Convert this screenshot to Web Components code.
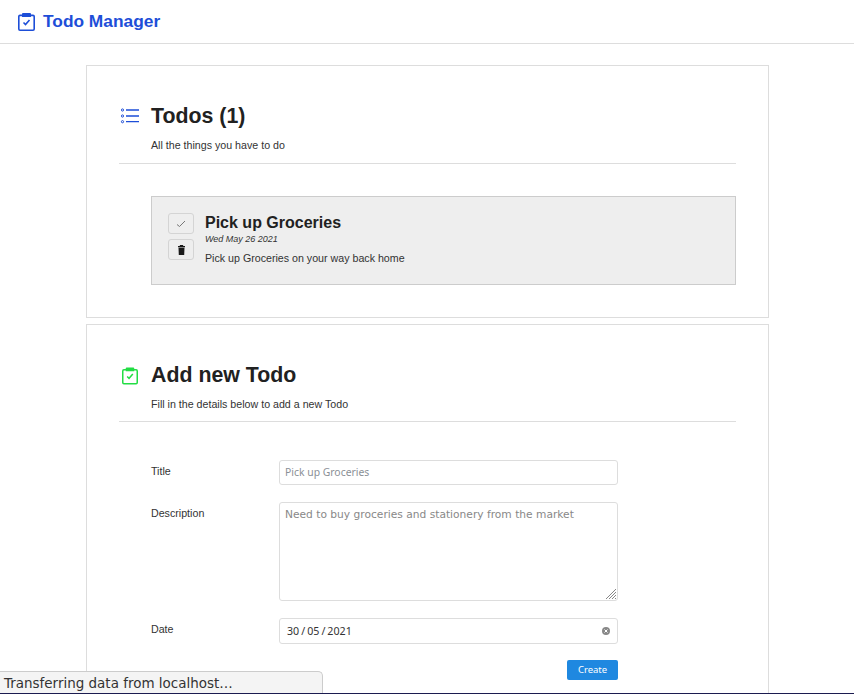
<!DOCTYPE html>
<html><head><meta charset="utf-8">
<style>
html,body{margin:0;padding:0;height:694px;overflow:hidden;background:#fff;font-family:"Liberation Sans",Arial,sans-serif;color:#212121}
</style></head><body>
<script>
const def=(n,html)=>customElements.define(n,class extends HTMLElement{constructor(){super();this.attachShadow({mode:'open'}).innerHTML=html}});
def('clip-icon',`<style>:host{display:block;width:17px;height:18px}svg{display:block;width:100%;height:100%}</style>
<svg viewBox="0 0 17 18" fill="none" stroke="currentColor" stroke-linejoin="round"><rect x=".8" y="2.400" width="15.400" height="14.800" rx="1.200" stroke-width="1.600"/><path fill="currentColor" stroke="none" d="M4 1a1 1 0 0 1 1-1h7a1 1 0 0 1 1 1v3H4z"/><path stroke-width="1.600" stroke-linejoin="miter" d="M5.500 9.500l2 2 4-4.500"/></svg>`);
def('app-nav',`<style>:host{display:flex;align-items:center;height:43px;border-bottom:1px solid #ddd;padding-left:18px;gap:8px}
clip-icon{color:#1d4ed8;margin-top:1px}
span{font:700 17.330px/20px "Liberation Sans",sans-serif;color:#1d4ed8;margin-bottom:2px}</style>
<clip-icon></clip-icon><span>Todo Manager</span>`);
def('app-main',`<style>:host{display:block;width:683px;margin:21px 0 0 86px}</style><slot></slot>`);
def('app-card',`<style>:host{display:block;border:1px solid #ddd;box-sizing:border-box;padding:33px 32px 32px;margin-bottom:6px}
header{display:grid;grid-template-columns:32px 1fr;align-items:center}
.i{display:flex}
h2{margin:0;padding-top:1px;font:700 21.330px/33px "Liberation Sans",sans-serif;color:#212121}
p{grid-column:2;margin:5px 0 0;font:10.670px/14px "Liberation Sans",sans-serif;color:#333}
hr{border:0;border-top:1px solid #ddd;margin:var(--hr,11px) 0 0}
</style>
<header><div class="i"><slot name="icon"></slot></div><h2><slot name="title"></slot></h2><p><slot name="sub"></slot></p></header><hr><slot></slot>`);
def('todo-item',`<style>:host{display:flex;margin:32px 0 0 32px;background:#eee;border:1px solid #ccc;height:89px;box-sizing:border-box;padding:16px;gap:11px}
.b{display:flex;flex-direction:column;gap:5px;width:26px}
button{all:unset;box-sizing:border-box;width:26px;height:21px;border:1px solid #d4d4d4;border-radius:3px;display:flex;align-items:center;justify-content:center;background:#eee}
h3{margin:0;font:700 16px/20px "Liberation Sans",sans-serif;color:#212121}
em{display:block;font:italic 9px/12px "Liberation Sans",sans-serif;color:#333}
p{margin:6px 0 0;font:10.670px/14px "Liberation Sans",sans-serif;color:#333}
</style>
<div class="b"><button aria-label="done"><svg width="10" height="8" viewBox="0 0 10 8" fill="none" stroke="#777" stroke-width="1"><path d="M1 4.500l2.500 2L9 1"/></svg></button>
<button aria-label="delete"><svg width="7" height="10" viewBox="0 0 7 10" fill="#1a1a1a"><path d="M2 0h3l.3 1H7v1.200H0V1h1.700zM.5 2.800h6L6.200 10H.8z"/></svg></button></div>
<div><h3>Pick up Groceries</h3><em>Wed May 26 2021</em><p>Pick up Groceries on your way back home</p></div>`);
def('todo-form',`<style>:host{display:grid;grid-template-columns:128px 339px;margin:38px 0 0 32px;row-gap:17px;font:10.670px/14px "Liberation Sans",sans-serif;color:#333}
label{padding-top:4px}
.f{box-sizing:border-box;border:1px solid #ddd;border-radius:3px;padding:0 5px;background:#fff;display:flex;align-items:center}
.t{height:25px;padding-bottom:2px;color:#8a8f96;font:10.400px "Noto Sans","Open Sans",sans-serif}
.d{height:99px;color:#888;align-items:flex-start;padding-top:4px;font:10.670px/15px "DejaVu Sans",sans-serif;position:relative}
.g{position:absolute;right:0;bottom:0}
.da{height:26px;color:#333;font:10.670px "Noto Sans",sans-serif;padding-left:7px;justify-content:space-between}
.da i{font-style:normal;margin:0 2px}
.x{width:8px;height:8px;margin-right:2px}
button{all:unset;grid-column:2;justify-self:end;box-sizing:border-box;width:51px;height:20px;margin-top:-1px;background:#1f88e0;color:#fff;border-radius:2px;font:9.500px/20px "Noto Sans",sans-serif;text-align:center}
</style>
<label>Title</label><div class="f t">Pick up Groceries</div>
<label>Description</label><div class="f d">Need to buy groceries and stationery from the market<svg class="g" width="12" height="12" viewBox="0 0 12 12" stroke="#888" stroke-width="1"><path d="M11 1L1 11M11 4L4 11M11 7L7 11M11 10L10 11"/></svg></div>
<label>Date</label><div class="f da"><span>30<i>/</i>05<i>/</i>2021</span><svg class="x" viewBox="0 0 8 8"><circle cx="4" cy="4" r="4" fill="#888"/><path d="M2.500 2.500l3 3M5.500 2.500l-3 3" stroke="#fff" stroke-width="1"/></svg></div>
<button>Create</button>`);
def('status-bar',`<style>:host{position:absolute;left:-1px;top:671px;width:324px;height:23px;box-sizing:border-box;background:#f4f4f4;border:1px solid #ccc;border-bottom:0;border-top-right-radius:5px;font:13.470px/22px "DejaVu Sans","Noto Sans",sans-serif;color:#333;padding-left:4px;overflow:hidden;white-space:nowrap}</style><slot></slot>`);
</script>
<app-nav></app-nav>
<app-main>
<app-card>
<svg slot="icon" width="20" height="20" viewBox="0 0 20 20" fill="none" stroke="#1d4ed8"><path stroke-width="1.300" d="M7 4h13M7 10h13M7 15.700h13"/><g stroke-width="1"><circle cx="3.500" cy="4" r="1.100"/><circle cx="3.500" cy="10" r="1.100"/><circle cx="3.500" cy="15.700" r="1.100"/></g></svg>
<span slot="title">Todos (1)</span><span slot="sub">All the things you have to do</span>
<todo-item></todo-item>
</app-card>
<app-card style="height:500px;--hr:10px">
<clip-icon slot="icon" style="width:16px;height:18px;margin:2px 0 0 3px;color:#22dd44"></clip-icon>
<span slot="title">Add new Todo</span><span slot="sub">Fill in the details below to add a new Todo</span>
<todo-form></todo-form>
</app-card>
</app-main>
<status-bar>Transferring data from localhost…</status-bar>
<div style="position:absolute;left:0;right:0;top:693px;height:1px;background:#1c1c50"></div>
</body></html>
